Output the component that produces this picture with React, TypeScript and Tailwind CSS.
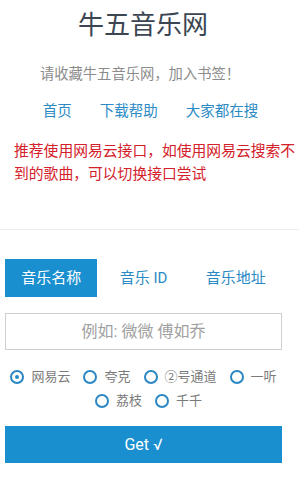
import { useState } from "react";

const FONT = { fontFamily: '"Roboto", "Noto Sans CJK SC", sans-serif' };

const SOURCES_ROW1 = ["网易云", "夸克", "②号通道", "一听"];
const SOURCES_ROW2 = ["荔枝", "千千"];
const TABS = ["音乐名称", "音乐 ID", "音乐地址"];

function Radio({ label, checked, onPick }: { label: string; checked: boolean; onPick: () => void }) {
  return (
    <button onClick={onPick} className="flex items-center gap-[7px]">
      <span className="w-[14px] h-[14px] rounded-full border-[2.5px] border-[#2a87c3] flex items-center justify-center">
        {checked && <span className="w-[4px] h-[4px] rounded-full bg-[#2a87c3]" />}
      </span>
      <span className="text-[13px] leading-[24px] text-[#7a7a7a]">{label}</span>
    </button>
  );
}

export default function App() {
  const [tab, setTab] = useState(0);
  const [source, setSource] = useState("网易云");

  return (
    <div style={FONT} className="w-[299px] h-[496px] bg-white overflow-hidden">
      <h1 className="pt-[9px] pr-[13px] text-center text-[26px] leading-[32px] font-normal text-[#3b4652]">
        牛五音乐网
      </h1>
      <p className="mt-[23px] pr-[19px] text-center text-[14.3px] leading-[20px] text-[#8c8c8c]">
        请收藏牛五音乐网，加入书签！
      </p>
      <nav className="mt-[18px] pl-[2px] flex justify-center gap-[28px] text-[14.5px] leading-[20px] text-[#2b8ac4]">
        <a>首页</a>
        <a>下载帮助</a>
        <a>大家都在搜</a>
      </nav>
      <p className="mt-[18px] pl-[14px] text-[14.8px] leading-[22.5px] text-[#d4202a]">
        推荐使用网易云接口，如使用网易云搜索不到的歌曲，可以切换接口尝试
      </p>

      <div className="mt-[44px] h-px bg-[#ececec]" />

      <div className="mt-[29px] pl-[5px] pr-[17px]">
        <div className="grid grid-cols-3 h-[38px]">
          {TABS.map((t, i) => (
            <button
              key={t}
              onClick={() => setTab(i)}
              className={
                "text-[15px] " +
                (tab === i ? "bg-[#1a8fd0] text-white" : "bg-white text-[#2b8ac4]")
              }
            >
              {t}
            </button>
          ))}
        </div>

        <input
          placeholder="例如: 微微 傅如乔"
          className="mt-[16px] w-full h-[37px] border border-[#cfcfcf] text-center text-[16px] text-[#333] placeholder:text-[#a0a0a0] outline-none"
        />

        <div className="mt-[15px] flex justify-center gap-[13px]">
          {SOURCES_ROW1.map((s) => (
            <Radio key={s} label={s} checked={source === s} onPick={() => setSource(s)} />
          ))}
        </div>
        <div className="pl-[10px] flex justify-center gap-[13px]">
          {SOURCES_ROW2.map((s) => (
            <Radio key={s} label={s} checked={source === s} onPick={() => setSource(s)} />
          ))}
        </div>

        <button className="mt-[13px] w-full h-[37px] bg-[#1a8fd0] text-white text-[16px]">
          Get √
        </button>
      </div>
    </div>
  );
}
